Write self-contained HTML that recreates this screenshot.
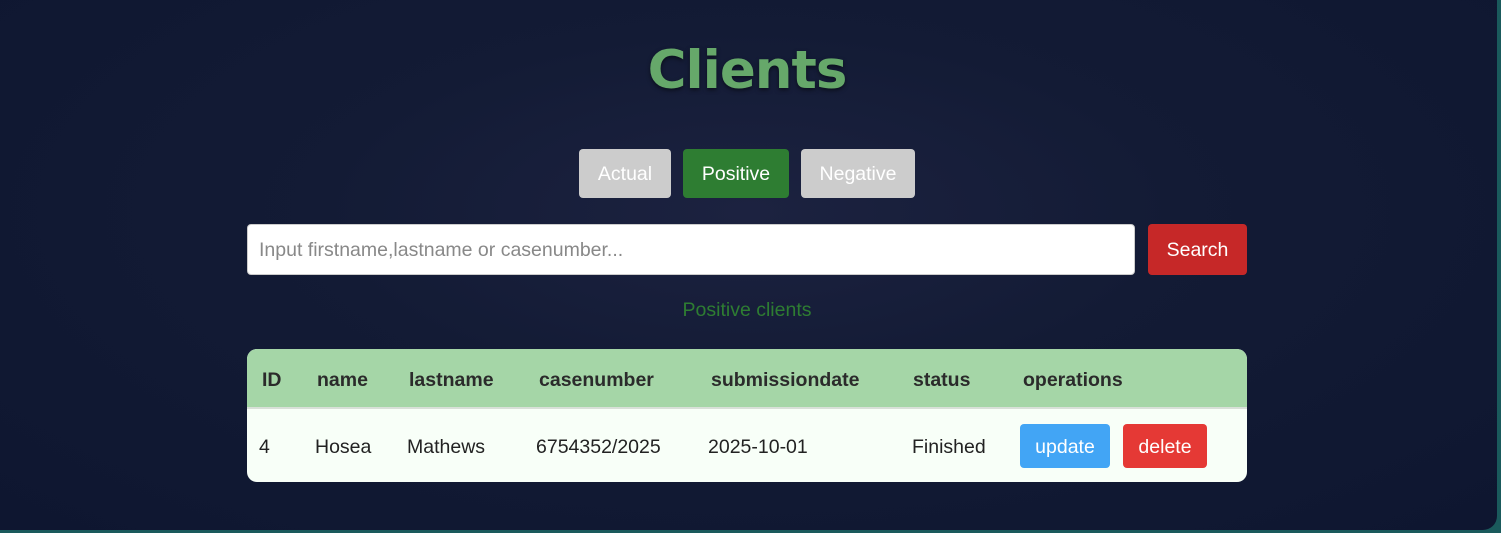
<!DOCTYPE html>
<html><head><meta charset="utf-8"><style>
*{margin:0;padding:0;box-sizing:border-box}
body{width:1501px;height:533px;background:#1a5a5c;overflow:hidden;font-family:"Liberation Sans",Arial,sans-serif;position:relative}
.panel{position:absolute;left:0;top:0;width:1497px;height:530px;border-radius:0 0 14px 0;background:radial-gradient(ellipse at 50% 40%,#1c2240 0%,#131b35 40%,#0e1630 100%)}
.a{position:absolute}
h1{position:absolute;left:0;width:1494px;top:40px;text-align:center;font-family:"DejaVu Sans",Verdana,sans-serif;font-weight:bold;font-size:53px;letter-spacing:-1px;color:#66a86a;text-shadow:0 2px 4px rgba(0,0,0,.5)}
.btn{position:absolute;border-radius:4px;color:#fff;font-size:19.5px;display:flex;align-items:center;justify-content:center;padding-top:2px}
.th{position:absolute;top:369px;font-weight:bold;font-size:19.5px;color:#2b2b2b}
.td{position:absolute;top:436px;font-size:19.5px;color:#222}
</style></head><body>
<div class="panel">
<h1>Clients</h1>
<div class="btn" style="left:579px;top:149px;width:92px;height:49px;background:#cccccc">Actual</div>
<div class="btn" style="left:683px;top:149px;width:106px;height:49px;background:#2e7d32">Positive</div>
<div class="btn" style="left:801px;top:149px;width:114px;height:49px;background:#cccccc">Negative</div>
<div class="a" style="left:247px;top:224px;width:888px;height:51px;background:#fff;border-radius:4px;border:1px solid #ccc;color:#888;font-size:19.5px;padding:14px 0 0 11px">Input firstname,lastname or casenumber...</div>
<div class="btn" style="left:1148px;top:224px;width:99px;height:51px;background:#c62828">Search</div>
<div class="a" style="left:0;width:1494px;top:299px;text-align:center;color:#2e7d32;font-size:19.5px">Positive clients</div>
<div class="a" style="left:247px;top:349px;width:1000px;height:133px;background:#f8fff8;border-radius:10px;overflow:hidden">
<div style="height:60px;background:#a5d6a7;border-bottom:2px solid #d8e0d8"></div>
</div>
<div class="th" style="left:262px">ID</div>
<div class="th" style="left:317px">name</div>
<div class="th" style="left:409px">lastname</div>
<div class="th" style="left:539px">casenumber</div>
<div class="th" style="left:711px">submissiondate</div>
<div class="th" style="left:913px">status</div>
<div class="th" style="left:1023px">operations</div>
<div class="td" style="left:259px">4</div>
<div class="td" style="left:315px">Hosea</div>
<div class="td" style="left:407px">Mathews</div>
<div class="td" style="left:536px">6754352/2025</div>
<div class="td" style="left:708px">2025-10-01</div>
<div class="td" style="left:912px">Finished</div>
<div class="btn" style="left:1020px;top:424px;width:90px;height:44px;background:#42a5f5">update</div>
<div class="btn" style="left:1123px;top:424px;width:84px;height:44px;background:#e53935">delete</div>
</div>
</body></html>
